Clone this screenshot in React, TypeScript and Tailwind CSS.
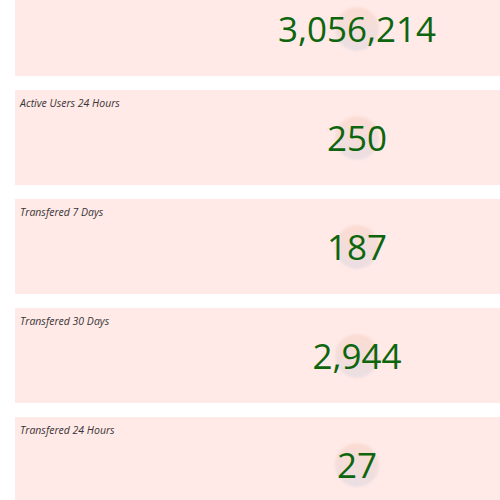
const stats = [
  { label: "", value: "3,056,214" },
  { label: "Active Users 24 Hours", value: "250" },
  { label: "Transfered 7 Days", value: "187" },
  { label: "Transfered 30 Days", value: "2,944" },
  { label: "Transfered 24 Hours", value: "27" },
];

function StatCard({ label, value }: { label: string; value: string }) {
  return (
    <div className="h-[95px] w-[684px] shrink-0 bg-[#ffeae8] px-[5px] pt-[6px] flex flex-col">
      <p className="h-[14px] text-[10.5px] leading-[14px] italic text-[#3a3535] font-['Open_Sans',sans-serif]">
        {label}
      </p>
      <div className="flex justify-center pt-[6px]">
        <div className="relative flex items-center justify-center">
          <span className="absolute h-[44px] w-[44px] rounded-full bg-gradient-to-b from-[#fcdcd2] to-[#ebdfe3] blur-[1px]" />
          <span className="relative text-[35px] leading-[44px] text-[#0d650d] font-['Open_Sans',sans-serif]">
            {value}
          </span>
        </div>
      </div>
    </div>
  );
}

export default function App() {
  return (
    <div className="h-[500px] w-[500px] overflow-hidden bg-white">
      <div className="-mt-[19px] ml-[15px] flex flex-col gap-[14px]">
        {stats.map((s) => (
          <StatCard key={s.value} label={s.label} value={s.value} />
        ))}
      </div>
    </div>
  );
}
